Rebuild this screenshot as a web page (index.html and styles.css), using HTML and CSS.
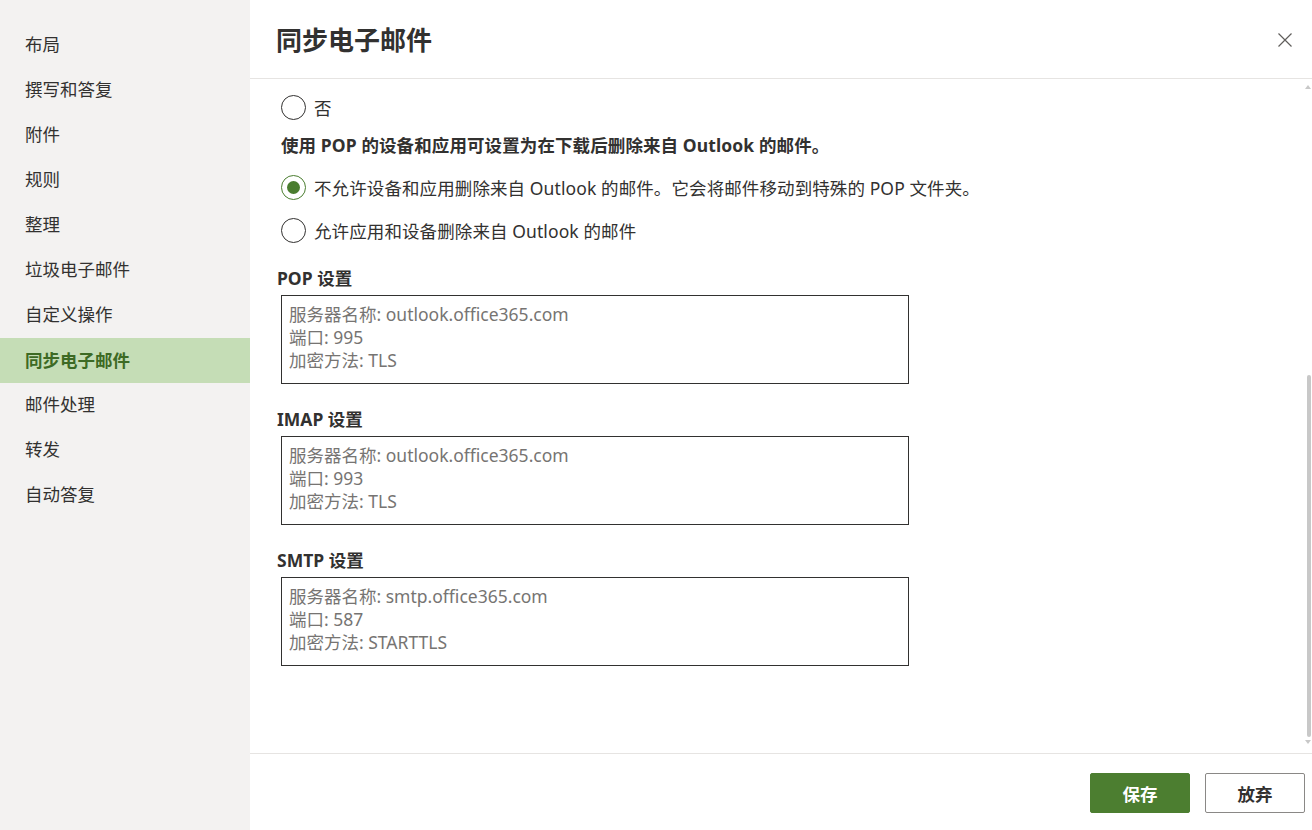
FILE: index.html
```html
<!DOCTYPE html>
<html lang="zh-CN">
<head>
<meta charset="utf-8">
<title>同步电子邮件</title>
<link rel="stylesheet" href="styles.css">
</head>
<body>
<div class="app">
  <nav class="sidebar">
    <div class="nav-item">布局</div>
    <div class="nav-item">撰写和答复</div>
    <div class="nav-item">附件</div>
    <div class="nav-item">规则</div>
    <div class="nav-item">整理</div>
    <div class="nav-item">垃圾电子邮件</div>
    <div class="nav-item">自定义操作</div>
    <div class="nav-item active">同步电子邮件</div>
    <div class="nav-item">邮件处理</div>
    <div class="nav-item">转发</div>
    <div class="nav-item">自动答复</div>
  </nav>
  <main class="panel">
    <header class="header">
      <h1 class="title">同步电子邮件</h1>
      <button class="close" aria-label="关闭">
        <svg width="16" height="16" viewBox="0 0 16 16"><path d="M1.5 1.5 L14.5 14.5 M14.5 1.5 L1.5 14.5" stroke="#605e5c" stroke-width="1.2" fill="none"/></svg>
      </button>
    </header>
    <section class="content">
      <div class="radio-row r-no"><span class="radio"></span><span>否</span></div>
      <div class="bold-line">使用 POP 的设备和应用可设置为在下载后删除来自 Outlook 的邮件。</div>
      <div class="radio-row r-1"><span class="radio checked"></span><span>不允许设备和应用删除来自 Outlook 的邮件。它会将邮件移动到特殊的 POP 文件夹。</span></div>
      <div class="radio-row r-2"><span class="radio"></span><span>允许应用和设备删除来自 Outlook 的邮件</span></div>

      <div class="label">POP 设置</div>
      <div class="box">服务器名称: outlook.office365.com<br>端口: 995<br>加密方法: TLS</div>

      <div class="label">IMAP 设置</div>
      <div class="box">服务器名称: outlook.office365.com<br>端口: 993<br>加密方法: TLS</div>

      <div class="label">SMTP 设置</div>
      <div class="box">服务器名称: smtp.office365.com<br>端口: 587<br>加密方法: STARTTLS</div>

      <div class="scrollbar">
        <span class="arrow up"></span>
        <span class="thumb"></span>
        <span class="arrow down"></span>
      </div>
    </section>
    <footer class="footer">
      <button class="btn primary">保存</button>
      <button class="btn">放弃</button>
    </footer>
  </main>
</div>
</body>
</html>
```
FILE: styles.css
```css
* { box-sizing: border-box; }
html, body {
  margin: 0;
  padding: 0;
  width: 1312px;
  height: 830px;
  overflow: hidden;
  background: #ffffff;
  font-family: "Noto Sans", "Noto Sans CJK SC", sans-serif;
  color: #323130;
}
.app {
  display: flex;
  width: 1312px;
  height: 830px;
}
.sidebar {
  width: 250px;
  flex: none;
  background: #f3f2f1;
  padding-top: 22px;
}
.nav-item {
  height: 45px;
  line-height: 45px;
  padding-left: 25px;
  font-size: 17.5px;
  color: #323130;
}
.nav-item.active {
  margin-top: 1px;
  margin-bottom: -1px;
  background: #c5ddb6;
  color: #3d6a24;
  font-weight: 700;
}
.panel {
  flex: 1;
  display: flex;
  flex-direction: column;
  min-width: 0;
}
.header {
  height: 79px;
  flex: none;
  border-bottom: 1px solid #e6e4e2;
  display: flex;
  align-items: center;
  justify-content: space-between;
  padding: 0 19px 0 26px;
}
.title {
  margin: 0;
  font-size: 26px;
  font-weight: 700;
  color: #323130;
  line-height: 1;
  margin-top: 1px;
}
.close {
  border: 0;
  background: none;
  padding: 0;
  width: 16px;
  height: 16px;
  display: flex;
  margin-top: 1px;
}
.content {
  position: relative;
  flex: 1;
  padding: 13px 0 0 31px;
  font-size: 17.5px;
}
.radio-row {
  display: flex;
  align-items: center;
  height: 30px;
  gap: 8px;
  color: #323130;
}
.radio {
  width: 25px;
  height: 25px;
  border: 1.5px solid #323130;
  border-radius: 50%;
  flex: none;
  display: flex;
  align-items: center;
  justify-content: center;
}
.radio.checked {
  border-color: #4a7d2f;
}
.radio.checked::after {
  content: "";
  width: 13px;
  height: 13px;
  border-radius: 50%;
  background: #4a7d2f;
}
.bold-line {
  margin-top: 11px;
  height: 24px;
  line-height: 24px;
  font-weight: 700;
  font-size: 17.5px;
  letter-spacing: 0.1px;
}
.r-1 { margin-top: 15px; letter-spacing: 0.1px; }
.r-2 { margin-top: 13px; letter-spacing: 0.1px; }
.label {
  margin-left: -4px;
  height: 24px;
  line-height: 24px;
  font-weight: 700;
  margin-top: 23px;
}
.r-2 + .label { margin-top: 21px; }
.box {
  margin-top: 5px;
  width: 628px;
  height: 89px;
  border: 1.5px solid #323130;
  padding: 7px 7px;
  line-height: 23px;
  color: #767472;
  font-size: 17.5px;
}
.scrollbar {
  position: absolute;
  right: 0;
  top: 6px;
  bottom: 9px;
  width: 6px;
}
.thumb {
  position: absolute;
  right: 1px;
  top: 290px;
  height: 362px;
  width: 4px;
  border-radius: 2px;
  background: #c8c8c8;
}
.arrow {
  position: absolute;
  right: 1px;
  width: 0;
  height: 0;
  border-left: 3px solid transparent;
  border-right: 3px solid transparent;
}
.arrow.up { top: 0; border-bottom: 4px solid #c8c8c8; }
.arrow.down { bottom: 0; border-top: 4px solid #c8c8c8; }
.footer {
  height: 77px;
  flex: none;
  border-top: 1px solid #e6e4e2;
  display: flex;
  justify-content: flex-end;
  align-items: flex-start;
  gap: 15px;
  padding: 19px 7px 0 0;
}
.btn {
  width: 100px;
  height: 40px;
  border: 1px solid #8a8886;
  border-radius: 2px;
  background: #ffffff;
  font-family: "Noto Sans", "Noto Sans CJK SC", sans-serif;
  font-size: 17.5px;
  font-weight: 700;
  color: #323130;
  padding: 0;
}
.btn.primary {
  background: #4c7e30;
  border-color: #4c7e30;
  color: #ffffff;
}
```
